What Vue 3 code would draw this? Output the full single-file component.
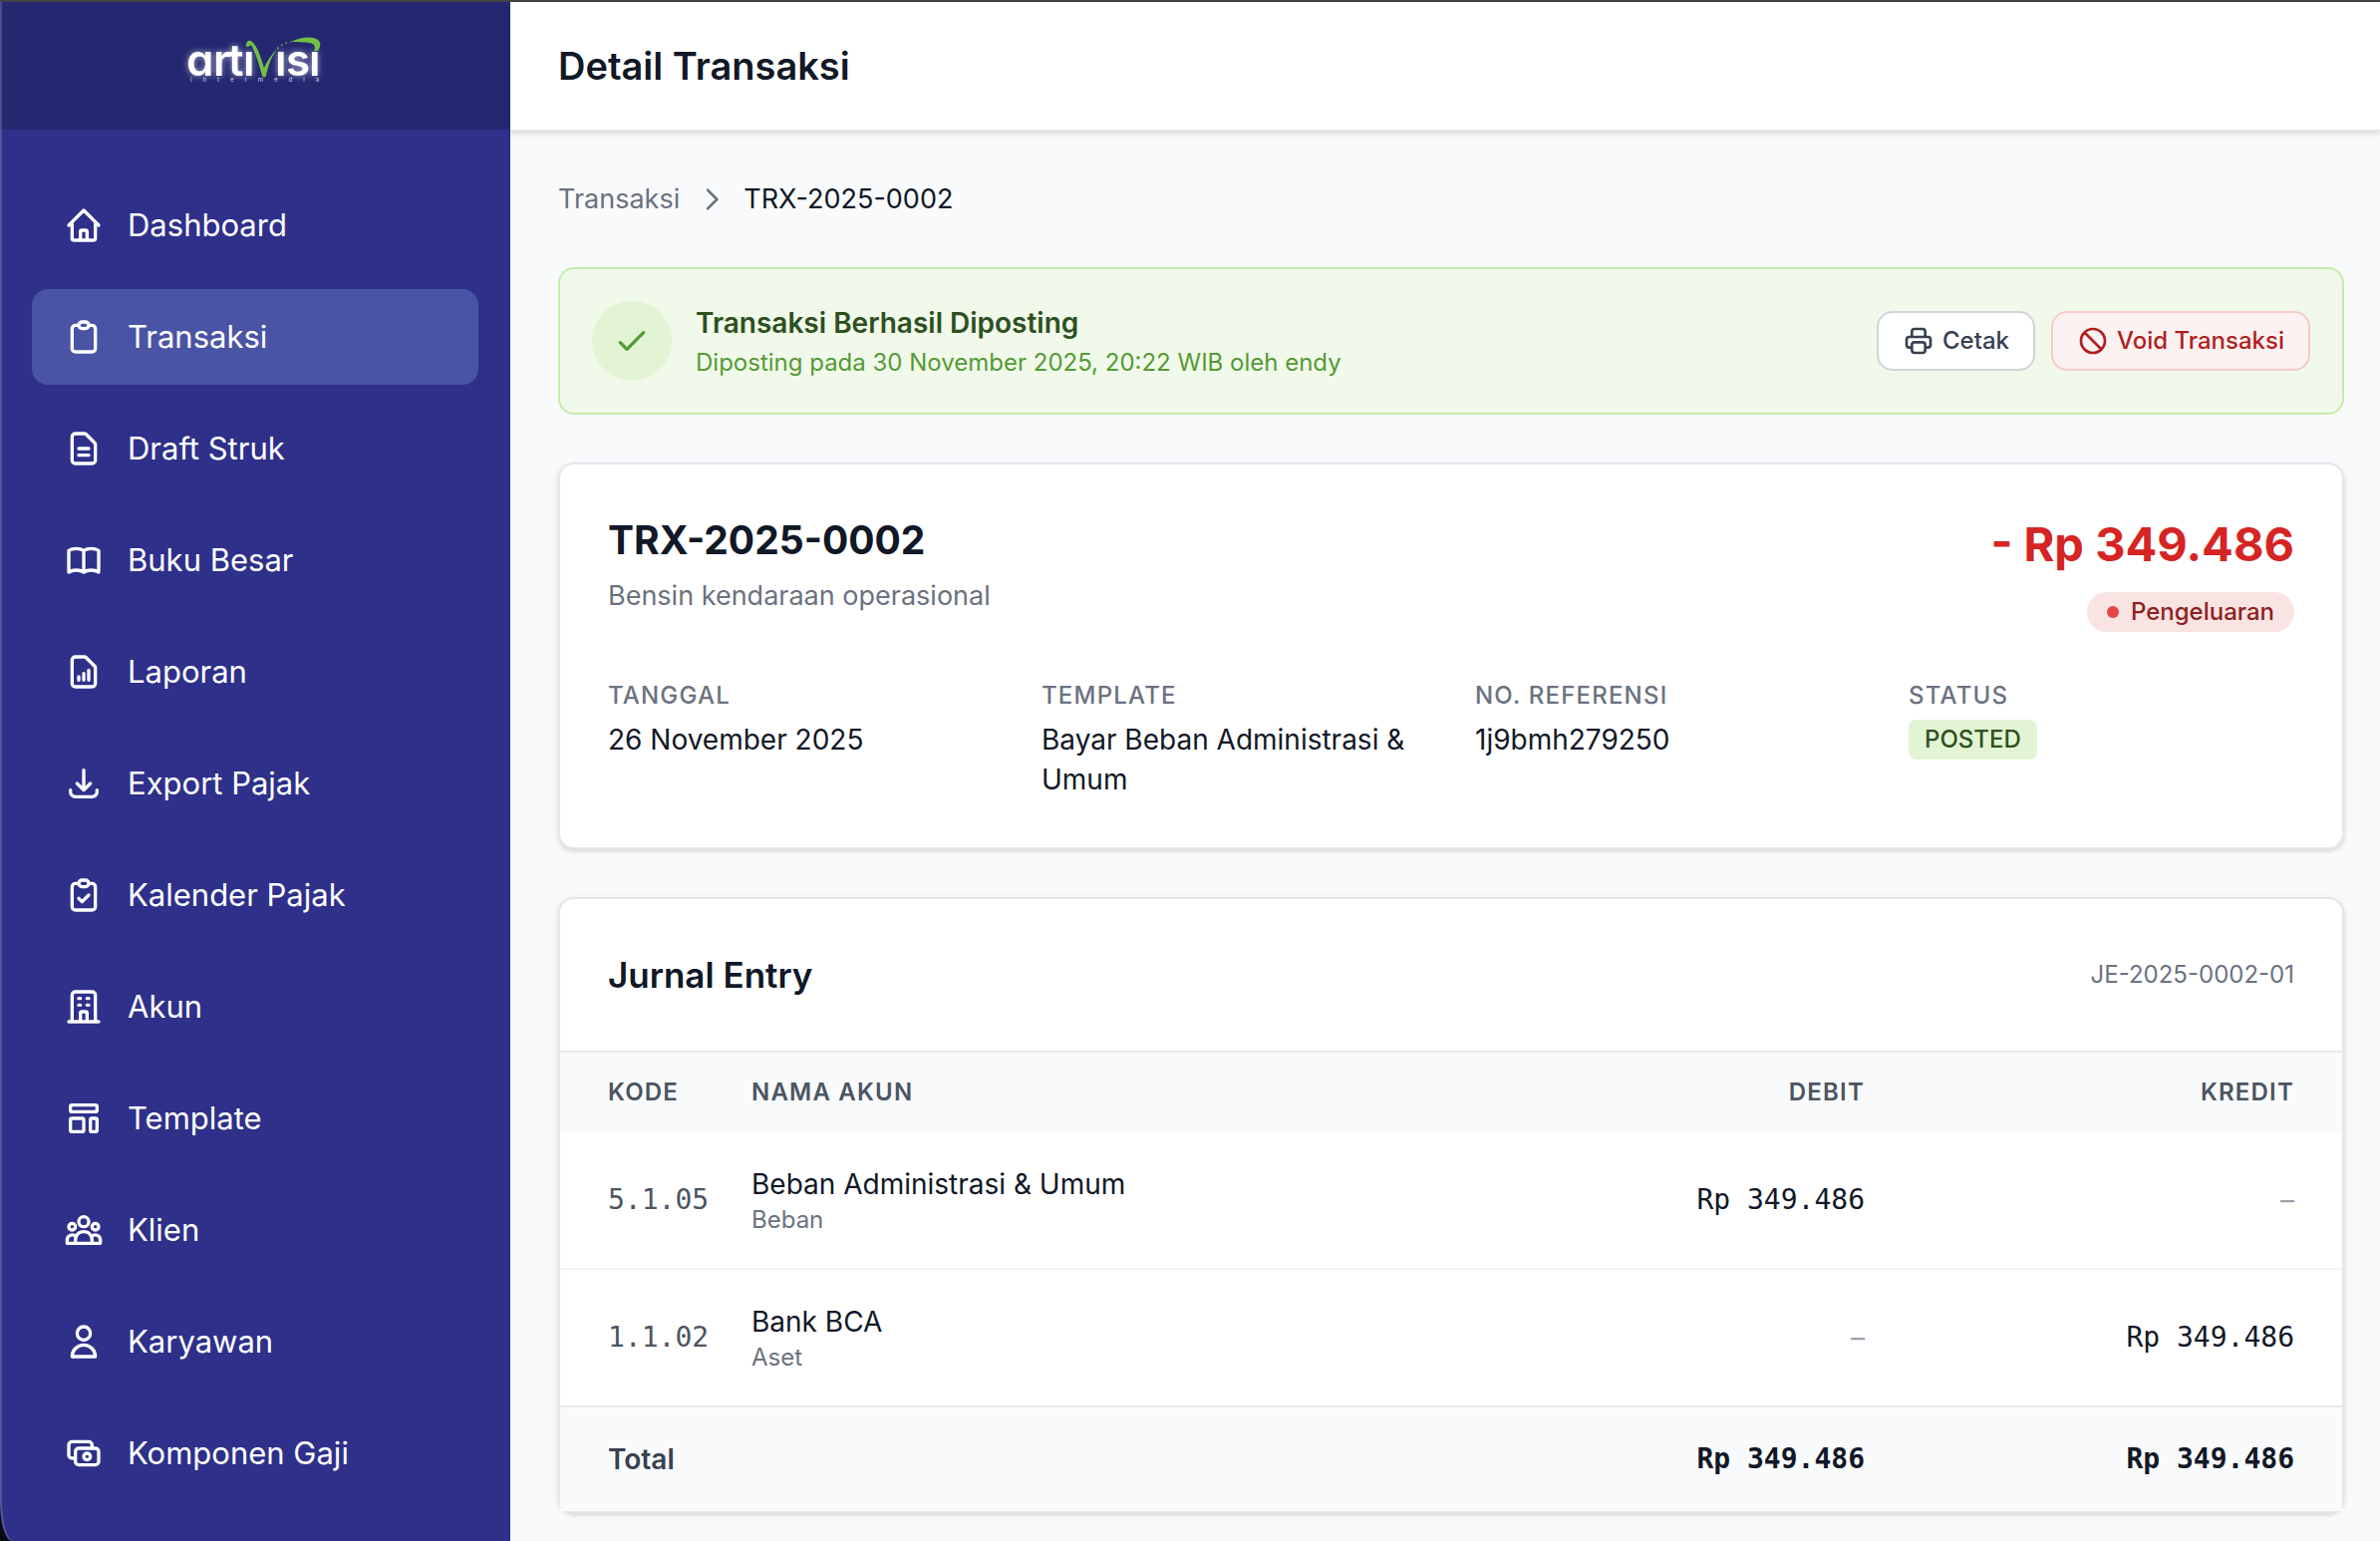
<template>
  <div class="app">
    <aside class="sidebar">
      <div class="brand">
        <a href="#" class="logo">
          <svg width="152" height="56" viewBox="0 0 152 56" role="img" aria-label="artivisi intermedia">
            <g class="logo-word">
              <text x="7 34 49 64" y="46">artı</text>
              <text x="96 107 130" y="46">ısı</text>
            </g>
            <g class="logo-swoosh">
              <path d="M67 17c-1-5 3-8 6-5 6 5 9 17 12 26 3-7 7-13 13-19-5 7-9 16-11 27-1 2-3 2-4 0-3-11-6-22-11-31-1 1-3 2-5 2z" />
              <path d="M112 12c9-5 22-6 27-2 4 3 2 8 0 11h-4c2-3 1-7-4-8-6-1-12-1-19-1z" />
              <path class="logo-trail" d="M98 19c4-4 8-6 14-7" />
            </g>
            <text class="logo-sub" x="11" y="52">intermedia</text>
          </svg>
        </a>
      </div>
      <nav class="nav">
        <a
          v-for="item in menu"
          :key="item.label"
          href="#"
          class="nav-item"
          :class="{ active: item.label === current }"
          @click.prevent="current = item.label"
        >
          <svg class="icon icon-nav" viewBox="0 0 24 24"><path :d="item.icon" /></svg>
          {{ item.label }}
        </a>
      </nav>
    </aside>

    <div class="page">
      <header class="topbar">
        <h1>Detail Transaksi</h1>
      </header>

      <main class="content">
        <nav class="breadcrumb">
          <a href="#">Transaksi</a>
          <svg class="icon icon-sm" viewBox="0 0 24 24"><path d="M9 5l7 7-7 7" /></svg>
          <span>TRX-2025-0002</span>
        </nav>

        <section class="alert">
          <div class="alert-icon">
            <svg class="icon icon-nav" viewBox="0 0 24 24"><path d="M5 13l4 4L19 7" /></svg>
          </div>
          <div class="alert-text">
            <p class="alert-title">Transaksi Berhasil Diposting</p>
            <p class="alert-sub">Diposting pada 30 November 2025, 20:22 WIB oleh endy</p>
          </div>
          <div class="actions">
            <button type="button" class="btn">
              <svg class="icon icon-sm" viewBox="0 0 24 24"><path :d="icons.printer" /></svg>
              Cetak
            </button>
            <button type="button" class="btn btn-danger">
              <svg class="icon icon-sm" viewBox="0 0 24 24"><path :d="icons.ban" /></svg>
              Void Transaksi
            </button>
          </div>
        </section>

        <section class="card summary">
          <div class="summary-head">
            <div>
              <h2>TRX-2025-0002</h2>
              <p class="desc">Bensin kendaraan operasional</p>
            </div>
            <div class="summary-amount">
              <p class="amount">- Rp 349.486</p>
              <span class="pill"><i class="dot"></i>Pengeluaran</span>
            </div>
          </div>
          <dl class="details">
            <div v-for="d in details" :key="d.label">
              <dt>{{ d.label }}</dt>
              <dd><span :class="{ badge: d.badge }">{{ d.value }}</span></dd>
            </div>
          </dl>
        </section>

        <section class="card">
          <div class="card-head">
            <h3>Jurnal Entry</h3>
            <span>JE-2025-0002-01</span>
          </div>
          <table>
            <thead>
              <tr>
                <th class="col-code">Kode</th>
                <th>Nama Akun</th>
                <th class="col-debit">Debit</th>
                <th class="col-credit">Kredit</th>
              </tr>
            </thead>
            <tbody>
              <tr v-for="row in entries" :key="row.code">
                <td class="col-code code">{{ row.code }}</td>
                <td>
                  <div>{{ row.name }}</div>
                  <div class="type">{{ row.type }}</div>
                </td>
                <td class="col-debit" :class="row.debit ? 'money' : 'empty'">{{ row.debit || '–' }}</td>
                <td class="col-credit" :class="row.credit ? 'money' : 'empty'">{{ row.credit || '–' }}</td>
              </tr>
            </tbody>
            <tfoot>
              <tr>
                <td class="col-code total" colspan="2">Total</td>
                <td class="col-debit money">Rp 349.486</td>
                <td class="col-credit money">Rp 349.486</td>
              </tr>
            </tfoot>
          </table>
        </section>
      </main>
    </div>
  </div>
</template>

<script setup>
import { ref } from 'vue'

const current = ref('Transaksi')

const icons = {
  printer: 'M17 17h2a2 2 0 002-2v-4a2 2 0 00-2-2H5a2 2 0 00-2 2v4a2 2 0 002 2h2m2 4h6a2 2 0 002-2v-4a2 2 0 00-2-2H9a2 2 0 00-2 2v4a2 2 0 002 2zm8-12V5a2 2 0 00-2-2H9a2 2 0 00-2 2v4h10z',
  ban: 'M18.364 18.364A9 9 0 005.636 5.636m12.728 12.728A9 9 0 015.636 5.636m12.728 12.728L5.636 5.636'
}

const menu = [
  { label: 'Dashboard', icon: 'M3 12l2-2m0 0l7-7 7 7M5 10v10a1 1 0 001 1h3m10-11l2 2m-2-2v10a1 1 0 01-1 1h-3m-6 0a1 1 0 001-1v-4a1 1 0 011-1h2a1 1 0 011 1v4a1 1 0 001 1m-6 0h6' },
  { label: 'Transaksi', icon: 'M9 5H7a2 2 0 00-2 2v12a2 2 0 002 2h10a2 2 0 002-2V7a2 2 0 00-2-2h-2M9 5a2 2 0 002 2h2a2 2 0 002-2M9 5a2 2 0 012-2h2a2 2 0 012 2' },
  { label: 'Draft Struk', icon: 'M9 12h6m-6 4h6m2 5H7a2 2 0 01-2-2V5a2 2 0 012-2h5.586a1 1 0 01.707.293l5.414 5.414a1 1 0 01.293.707V19a2 2 0 01-2 2z' },
  { label: 'Buku Besar', icon: 'M12 6.253v13m0-13C10.832 5.477 9.246 5 7.5 5S4.168 5.477 3 6.253v13C4.168 18.477 5.754 18 7.5 18s3.332.477 4.5 1.253m0-13C13.168 5.477 14.754 5 16.5 5c1.747 0 3.332.477 4.5 1.253v13C19.832 18.477 18.247 18 16.5 18c-1.746 0-3.332.477-4.5 1.253' },
  { label: 'Laporan', icon: 'M9 17v-2m3 2v-4m3 4v-6m2 10H7a2 2 0 01-2-2V5a2 2 0 012-2h5.586a1 1 0 01.707.293l5.414 5.414a1 1 0 01.293.707V19a2 2 0 01-2 2z' },
  { label: 'Export Pajak', icon: 'M4 16v1a3 3 0 003 3h10a3 3 0 003-3v-1m-4-4l-4 4m0 0l-4-4m4 4V4' },
  { label: 'Kalender Pajak', icon: 'M9 5H7a2 2 0 00-2 2v12a2 2 0 002 2h10a2 2 0 002-2V7a2 2 0 00-2-2h-2M9 5a2 2 0 002 2h2a2 2 0 002-2M9 5a2 2 0 012-2h2a2 2 0 012 2m-6 9l2 2 4-4' },
  { label: 'Akun', icon: 'M19 21V5a2 2 0 00-2-2H7a2 2 0 00-2 2v16m14 0h2m-2 0h-5m-9 0H3m2 0h5M9 7h1m-1 4h1m4-4h1m-1 4h1m-5 10v-5a1 1 0 011-1h2a1 1 0 011 1v5m-4 0h4' },
  { label: 'Template', icon: 'M4 5a1 1 0 011-1h14a1 1 0 011 1v2a1 1 0 01-1 1H5a1 1 0 01-1-1V5zM4 13a1 1 0 011-1h6a1 1 0 011 1v6a1 1 0 01-1 1H5a1 1 0 01-1-1v-6zM16 13a1 1 0 011-1h2a1 1 0 011 1v6a1 1 0 01-1 1h-2a1 1 0 01-1-1v-6z' },
  { label: 'Klien', icon: 'M17 20h5v-2a3 3 0 00-5.356-1.857M17 20H7m10 0v-2c0-.656-.126-1.283-.356-1.857M7 20H2v-2a3 3 0 015.356-1.857M7 20v-2c0-.656.126-1.283.356-1.857m0 0a5.002 5.002 0 019.288 0M15 7a3 3 0 11-6 0 3 3 0 016 0zm6 3a2 2 0 11-4 0 2 2 0 014 0zM7 10a2 2 0 11-4 0 2 2 0 014 0z' },
  { label: 'Karyawan', icon: 'M16 7a4 4 0 11-8 0 4 4 0 018 0zM12 14a7 7 0 00-7 7h14a7 7 0 00-7-7z' },
  { label: 'Komponen Gaji', icon: 'M17 9V7a2 2 0 00-2-2H5a2 2 0 00-2 2v6a2 2 0 002 2h2m2 4h10a2 2 0 002-2v-6a2 2 0 00-2-2H9a2 2 0 00-2 2v6a2 2 0 002 2zm7-5a2 2 0 11-4 0 2 2 0 014 0z' }
]

const details = [
  { label: 'Tanggal', value: '26 November 2025' },
  { label: 'Template', value: 'Bayar Beban Administrasi & Umum' },
  { label: 'No. Referensi', value: '1j9bmh279250' },
  { label: 'Status', value: 'POSTED', badge: true }
]

const entries = [
  { code: '5.1.05', name: 'Beban Administrasi & Umum', type: 'Beban', debit: 'Rp 349.486', credit: '' },
  { code: '1.1.02', name: 'Bank BCA', type: 'Aset', debit: '', credit: 'Rp 349.486' }
]
</script>

<style>
*, *::before, *::after { box-sizing: border-box; }

body {
  margin: 0;
  background: #0b0b12;
}
</style>

<style scoped>
.app {
  --text: #111827;
  --text-muted: #6b7280;
  --border: #e5e7eb;
  --bg: #f9fafb;
  --shadow: 0 2px 6px rgba(0, 0, 0, 0.1), 0 2px 4px rgba(0, 0, 0, 0.06);
  display: flex;
  min-height: 100vh;
  border-top: 2px solid #444444;
  font-family: Inter, "Liberation Sans", sans-serif;
  font-size: 28px;
  line-height: 40px;
  color: var(--text);
}

h1, h2, h3, p, dl, dd { margin: 0; }

a {
  color: inherit;
  text-decoration: none;
}

.icon {
  flex: none;
  fill: none;
  stroke: currentColor;
  stroke-width: 2;
  stroke-linecap: round;
  stroke-linejoin: round;
}

.icon-nav { width: 40px; height: 40px; }
.icon-sm { width: 32px; height: 32px; }

/* Sidebar */
.sidebar {
  flex: none;
  width: 512px;
  background: #2e308a;
  color: #ffffff;
  border-bottom-left-radius: 12px 40px;
  box-shadow: inset 2px 0 0 rgba(255, 255, 255, 0.18);
}

.brand {
  display: flex;
  justify-content: center;
  height: 128px;
  padding-top: 28px;
  background: #252871;
  box-shadow: inset 2px 0 0 rgba(255, 255, 255, 0.18);
}

.logo svg { display: block; }

.logo-word {
  fill: #ffffff;
  font-family: Inter, sans-serif;
  font-size: 44px;
  font-weight: 600;
  font-feature-settings: "cv11";
  filter: drop-shadow(0 0 3px rgba(255, 255, 255, 0.6));
}

.logo-swoosh { fill: #72bf44; }

.logo-trail {
  fill: none;
  stroke: #72bf44;
  stroke-width: 2;
  stroke-dasharray: 2 3;
  opacity: 0.6;
}

.logo-sub {
  fill: #d5d6ee;
  font-size: 6px;
  letter-spacing: 11px;
}

.nav {
  display: flex;
  flex-direction: column;
  gap: 16px;
  padding: 48px 32px 32px;
}

.nav-item {
  display: flex;
  align-items: center;
  gap: 24px;
  padding: 24px 32px;
  border-radius: 16px;
  font-size: 31px;
  line-height: 48px;
}

.nav-item:hover { background: #3a3f97; }
.nav-item.active { background: #4a54a5; }

/* Page */
.page {
  flex: 1;
  min-width: 0;
  background: var(--bg);
}

.topbar {
  display: flex;
  align-items: center;
  height: 130px;
  padding: 0 48px;
  background: #ffffff;
  border-bottom: 2px solid var(--border);
  box-shadow: var(--shadow);
}

h1 {
  font-size: 38px;
  line-height: 56px;
  font-weight: 600;
}

.content {
  display: flex;
  flex-direction: column;
  gap: 48px;
  padding: 48px 36px 28px 48px;
}

.breadcrumb {
  display: flex;
  align-items: center;
  gap: 16px;
  font-size: 27px;
  color: var(--text-muted);
}

.breadcrumb span { color: var(--text); }

/* Posted notice */
.alert {
  display: flex;
  align-items: center;
  gap: 24px;
  padding: 32px;
  background: #f1f9ea;
  border: 2px solid #c5ecaa;
  border-radius: 16px;
}

.alert-icon {
  display: flex;
  align-items: center;
  justify-content: center;
  width: 80px;
  height: 80px;
  border-radius: 50%;
  background: #e2f4d3;
  color: #559a35;
}

.alert-text { flex: 1; }

.alert-title {
  font-weight: 600;
  color: #2d5020;
}

.alert-sub {
  margin-top: 4px;
  font-size: 24px;
  line-height: 32px;
  color: #559a35;
}

.actions {
  display: flex;
  gap: 16px;
}

.btn {
  display: flex;
  align-items: center;
  gap: 8px;
  padding: 12px 24px;
  border: 2px solid #d1d5db;
  border-radius: 16px;
  background: #ffffff;
  color: #374151;
  font-family: inherit;
  font-size: 24px;
  line-height: 32px;
  font-weight: 500;
  cursor: pointer;
}

.btn-danger {
  background: #fdf2f2;
  border-color: #f8caca;
  color: #b11f1f;
}

/* Cards */
.card {
  background: #ffffff;
  border: 2px solid var(--border);
  border-radius: 16px;
  box-shadow: var(--shadow);
}

.summary { padding: 48px; }

.summary-head {
  display: flex;
  justify-content: space-between;
}

h2 {
  font-size: 39px;
  line-height: 56px;
  font-weight: 700;
}

.desc {
  margin-top: 8px;
  font-size: 27px;
  color: var(--text-muted);
}

.summary-amount {
  display: flex;
  flex-direction: column;
  align-items: flex-end;
  gap: 16px;
}

.amount {
  font-size: 47px;
  line-height: 64px;
  font-weight: 700;
  color: #d62424;
}

.pill {
  display: flex;
  align-items: center;
  gap: 12px;
  padding: 4px 20px;
  border-radius: 20px;
  background: #f9e3e3;
  color: #8f1f1f;
  font-size: 24px;
  line-height: 32px;
  font-weight: 500;
}

.dot {
  width: 12px;
  height: 12px;
  border-radius: 50%;
  background: #e84545;
}

.details {
  display: grid;
  grid-template-columns: repeat(4, 1fr);
  gap: 48px;
  margin-top: 48px;
}

dt {
  margin-bottom: 8px;
  font-size: 24px;
  line-height: 32px;
  font-weight: 500;
  letter-spacing: 0.05em;
  text-transform: uppercase;
  color: var(--text-muted);
}

.badge {
  display: block;
  width: fit-content;
  padding: 4px 16px;
  border-radius: 8px;
  background: #e2f4d3;
  color: #2d5020;
  font-size: 24px;
  line-height: 32px;
  font-weight: 500;
}

.card-head {
  display: flex;
  align-items: center;
  justify-content: space-between;
  padding: 48px;
}

.card-head span {
  font-size: 24px;
  color: var(--text-muted);
}

h3 {
  font-size: 35px;
  line-height: 56px;
  font-weight: 600;
}

/* Journal table */
table {
  width: 100%;
  table-layout: fixed;
  border-collapse: separate;
  border-spacing: 0;
}

th {
  padding: 24px 0;
  border-top: 2px solid var(--border);
  background: var(--bg);
  color: #4b5563;
  font-size: 24px;
  line-height: 32px;
  font-weight: 600;
  letter-spacing: 0.05em;
  text-align: left;
  text-transform: uppercase;
}

td { padding: 32px 0; }

tbody tr + tr td { border-top: 2px solid #f3f4f6; }

.col-code {
  width: 192px;
  padding-left: 48px;
}

.col-debit {
  width: 431px;
  text-align: right;
}

.col-credit {
  width: 479px;
  padding-right: 48px;
  text-align: right;
}

.code, .money { font-family: "DejaVu Sans Mono", monospace; }
.code { color: #4b5563; }
.empty { color: #9ca3af; }

.type {
  font-size: 24px;
  line-height: 32px;
  color: var(--text-muted);
}

tfoot td {
  border-top: 2px solid var(--border);
  background: var(--bg);
  font-weight: 700;
}

tfoot .total {
  font-weight: 600;
  color: #374151;
}
</style>
